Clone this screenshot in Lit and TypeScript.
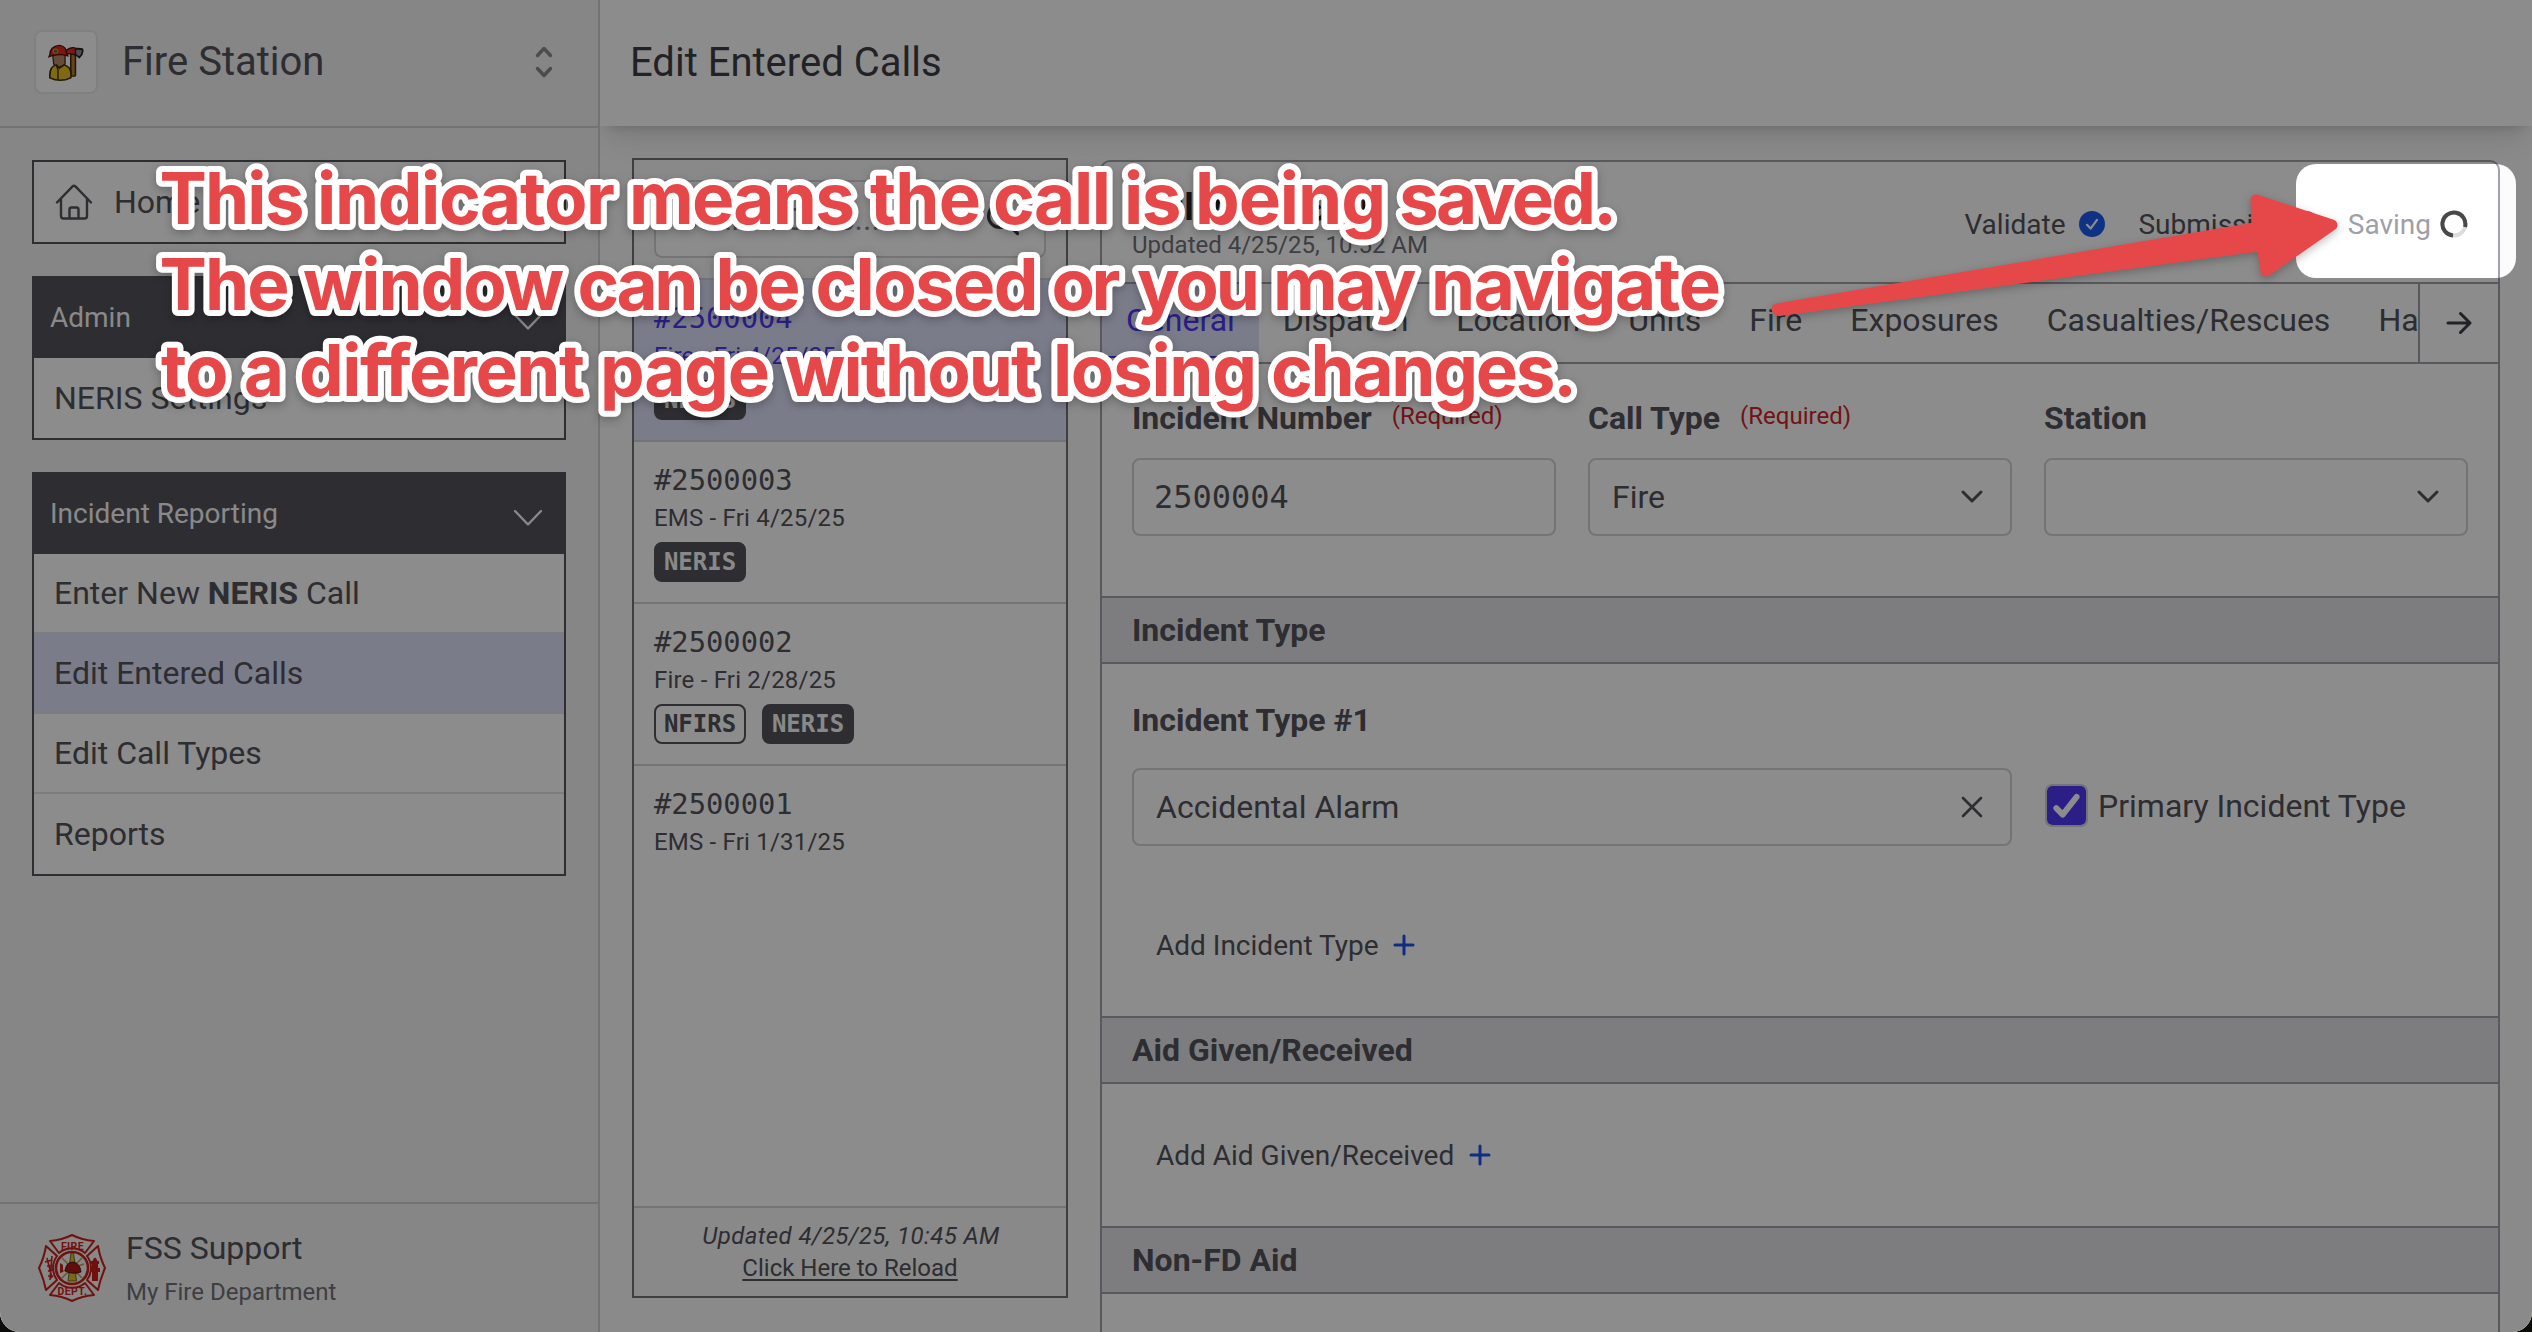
import { LitElement, html, css, svg } from "lit";
import { customElement, property } from "lit/decorators.js";
import { classMap } from "lit/directives/class-map.js";

const chevron = html`<svg class="chev" width="30" height="18" viewBox="0 0 30 18" fill="none" stroke="currentColor" stroke-width="2.4" stroke-linecap="round" stroke-linejoin="round"><path d="M2 2 L15 15.5 L28 2" /></svg>`;
const caret = html`<svg width="22" height="14" viewBox="0 0 22 14" fill="none" stroke="currentColor" stroke-width="3" stroke-linecap="round" stroke-linejoin="round"><path d="M2 2 L11 11 L20 2" /></svg>`;
const plus = html`<svg class="plus" width="22" height="22" viewBox="0 0 22 22" fill="none" stroke="#1d55ee" stroke-width="3" stroke-linecap="round"><path d="M11 2 V20 M2 11 H20" /></svg>`;
const okCircle = html`<svg width="26" height="26" viewBox="0 0 26 26"><circle cx="13" cy="13" r="13" fill="#1d5bf0" /><path d="M8 13.8 L11.6 17.6 L18 8.8" fill="none" stroke="#fff" stroke-width="2.2" stroke-linecap="round" stroke-linejoin="round" /></svg>`;

@customElement("fire-sidebar")
export class FireSidebar extends LitElement {
  static styles = css`
    :host { display: flex; flex-direction: column; width: 598px; flex: none; background: #f4f4f5; border-right: 2px solid #d4d4d8; color: #52525b; font-size: 32px; }
    .top { display: flex; align-items: center; box-sizing: border-box; padding: 0 45px 2px 34px; border-bottom: 2px solid #d4d4d8; height: 128px; }
    .tile { width: 60px; height: 60px; border: 2px solid #e9e9ec; border-radius: 8px; background: #fff; display: grid; place-items: center; margin-right: 24px; }
    .brand { font-size: 40px; flex: 1; line-height: 48px; }
    .menu { flex: 1; padding: 32px; display: flex; flex-direction: column; gap: 32px; }
    .box { border: 2px solid #52525b; background: #fff; }
    .home { display: flex; align-items: center; height: 80px; padding-left: 21px; gap: 21px; }
    .head { display: flex; align-items: center; justify-content: space-between; background: #52525b; color: #fafafa; font-size: 28px; height: 80px; padding: 0 21px 0 16px; }
    .head span { margin-top: -1px; }
    .chev { margin-top: 7px; }
    .row { height: 78px; line-height: 78px; padding-left: 20px; border-bottom: 2px solid #e4e4e7; }
    .row:last-child { height: 80px; line-height: 80px; border-bottom: 0; }
    .row.on { background: #e1e2fc; }
    .user { display: flex; align-items: center; height: 128px; border-top: 2px solid #d4d4d8; padding-left: 38px; gap: 20px; }
    .who { line-height: 40px; }
    .org { font-size: 24px; line-height: 32px; margin-top: 8px; color: #71717a; }
    .badge-text { font: bold 10.5px Roboto, "Liberation Sans", sans-serif; fill: #d3201c; letter-spacing: 0.4px; }
  `;
  render() {
    return html`
      <div class="top">
        <div class="tile">
          <svg width="36" height="37" viewBox="0 0 38 46" preserveAspectRatio="none">
            <rect x="24" y="10" width="5" height="30" rx="1.5" fill="#b57c36" stroke="#40280c" stroke-width="1.6" />
            <path d="M19 8 Q24 3 29 5 L36 6 Q38 11 33 17 Q30 12 19 12 Z" fill="#e82c22" stroke="#3a1512" stroke-width="1.4" />
            <path d="M29 6 L36.500 7 Q37 12 33 16.500 L29 13 Z" fill="#8d9096" stroke="#222" stroke-width="1.6" />
            <path d="M5 13 L18 13 L18 25 Q12 32 6 25 Z" fill="#b98a66" stroke="#4a2a1a" stroke-width="1.4" />
            <path d="M2 42 Q1 28 9 26 L12 30 L17 26 Q26 29 24 42 Q13 48 2 42 Z" fill="#e9c01a" stroke="#3b2f06" stroke-width="1.8" />
            <path d="M9 27 L10.500 32 V44" stroke="#3c3210" stroke-width="1.5" fill="none" />
            <path d="M2 13 Q2 3 12 1.500 Q20 3 19.500 12 Q21 13 21 15 Q11 11 1 16 Z" fill="#e3281d" stroke="#4a100c" stroke-width="1.4" />
            <circle cx="8" cy="9" r="2.600" fill="#4d6b2a" stroke="#e5c030" stroke-width="1" />
          </svg>
        </div>
        <div class="brand">Fire Station</div>
        <svg width="18" height="32" viewBox="0 0 18 32" fill="none" stroke="#8a8a93" stroke-width="3.4" stroke-linecap="round" stroke-linejoin="round"><path d="M2.500 9.500 L9 2.500 L15.500 9.500 M2.500 22.500 L9 29.500 L15.500 22.500" /></svg>
      </div>
      <div class="menu">
        <div class="box home">
          <svg width="38" height="36" viewBox="0 0 38 36" fill="none" stroke="#52525b" stroke-width="2.4" stroke-linecap="round" stroke-linejoin="round"><path d="M2 18.500 L17.600 2.400 Q19 1.200 20.400 2.400 L36 18.500 M6 15 V32 Q6 34.500 8.500 34.500 H29.500 Q32 34.500 32 32 V15 M14.500 34 V25.500 Q14.500 23.500 16.500 23.500 H21.500 Q23.500 23.500 23.500 25.500 V34" /></svg>
          <span>Home</span>
        </div>
        <div class="box">
          <div class="head"><span>Admin</span>${chevron}</div>
          <div class="row">NERIS Settings</div>
        </div>
        <div class="box">
          <div class="head"><span>Incident Reporting</span>${chevron}</div>
          <div class="row">Enter New <b>NERIS</b> Call</div>
          <div class="row on">Edit Entered Calls</div>
          <div class="row">Edit Call Types</div>
          <div class="row">Reports</div>
        </div>
      </div>
      <div class="user">
        <svg width="68" height="68" viewBox="0 0 68 68">
          <g fill="#f7f7f7" stroke="#c9211d" stroke-width="2" stroke-linejoin="round">
            <path d="M12 7 Q24 6 34 1 Q44 6 56 7 L47 19 A20 20 0 0 0 21 19 Z" />
            <path d="M12 61 Q24 62 34 67 Q44 62 56 61 L47 49 A20 20 0 0 1 21 49 Z" />
            <path d="M8 12 Q6 24 1 34 Q6 46 8 56 L19 46 A20 20 0 0 1 19 22 Z" />
            <path d="M60 12 Q62 24 67 34 Q62 46 60 56 L49 46 A20 20 0 0 0 49 22 Z" />
            <circle cx="34" cy="34" r="16" stroke-width="2.600" />
          </g>
          <path d="M54 47 V30 H53 V27 H54.500 Q57 20 59.500 27 H61 V30 H60 V47 Z M52 34 H62 V38 H52 Z" fill="#c9211d" />
          <path d="M9 24 L14 44 M14 22 L12 46 M7 28 L14 26 M9 32 L14 32 M10 37 L15 36 M10 42 L15 42" stroke="#c9211d" stroke-width="1.600" />
          <path d="M24 24 L44 44 M44 24 L24 44 M22 38 L46 30" stroke="#b9a050" stroke-width="1.500" />
          <path d="M33 19 H35.500 L37 30 H31.500 Z M31 38 H37.500 L38.500 47 H30 Z" fill="#d8bf2a" stroke="#5a4c10" stroke-width="0.800" />
          <path d="M27 37 Q28 28 35 28 Q42 29 43 38 Q35 41 27 37 Z" fill="#b01815" stroke="#3a0c0a" stroke-width="0.800" />
          <path d="M22 29 L25 31 V38 L22 39 Z" fill="#c9211d" />
          ${svg`<text class="badge-text" x="34.500" y="15.500" text-anchor="middle">FIRE</text><text class="badge-text" x="34.500" y="60.500" text-anchor="middle">DEPT.</text>`}
        </svg>
        <div>
          <div class="who">FSS Support</div>
          <div class="org">My Fire Department</div>
        </div>
      </div>
    `;
  }
}

interface Call { id: string; kind: string; tags: string[]; on?: boolean; }

@customElement("call-list")
export class CallList extends LitElement {
  @property({ attribute: false }) calls: Call[] = [
    { id: "#2500004", kind: "Fire - Fri 4/25/25", tags: ["NERIS"], on: true },
    { id: "#2500003", kind: "EMS - Fri 4/25/25", tags: ["NERIS"] },
    { id: "#2500002", kind: "Fire - Fri 2/28/25", tags: ["NFIRS", "NERIS"] },
    { id: "#2500001", kind: "EMS - Fri 1/31/25", tags: [] },
  ];
  static styles = css`
    :host { display: flex; flex-direction: column; box-sizing: border-box; width: 436px; height: 1140px; flex: none; border: 2px solid #71717a; background: #fff; color: #52525b; }
    .find { background: #fafafa; padding: 20px; border-bottom: 2px solid #d4d4d8; }
    .input { box-sizing: border-box; height: 78px; border: 2px solid #d4d4d8; border-radius: 8px; background: #fff; display: flex; align-items: center; justify-content: space-between; padding: 0 24px 0 22px; font-size: 32px; color: #85858e; }
    .list { flex: 1; }
    .item { box-sizing: border-box; height: 162px; padding: 20px 20px 0; border-bottom: 2px solid #d4d4d8; }
    .item:last-child { border-bottom: 0; }
    .item.on { background: #e1e2fc; color: #4f39f6; }
    .id { font: 28.8px/36px "DejaVu Sans Mono", "Liberation Mono", monospace; }
    .kind { font-size: 24px; line-height: 33px; margin-top: 4px; letter-spacing: 0.2px; }
    .tags { display: flex; gap: 16px; margin-top: 7px; }
    .tag { box-sizing: border-box; width: 92px; height: 40px; border: 2px solid #52525b; border-radius: 8px; text-align: center; font: bold 24px/36px "DejaVu Sans Mono", "Liberation Mono", monospace; color: #52525b; }
    .tag.full { background: #52525b; color: #fafafa; }
    .foot { box-sizing: border-box; height: 90px; border-top: 2px solid #d4d4d8; background: #fafafa; padding-top: 12px; text-align: center; font-size: 24px; line-height: 32px; }
    .foot i { letter-spacing: 0.4px; padding-left: 2px; }
    .foot u { text-underline-offset: 3px; text-decoration-thickness: 2px; }
  `;
  render() {
    return html`
      <div class="find">
        <div class="input"><span>Search Calls...</span>
          <svg width="34" height="34" viewBox="0 0 34 34" fill="none" stroke="#3f3f46" stroke-width="3.200" stroke-linecap="round"><circle cx="14" cy="14" r="11.500" /><path d="M22.500 22.500 L31.500 31.500" /></svg>
        </div>
      </div>
      <div class="list">
        ${this.calls.map((c) => html`
          <div class=${classMap({ item: true, on: !!c.on })}>
            <div class="id">${c.id}</div>
            <div class="kind">${c.kind}</div>
            <div class="tags">${c.tags.map((t) => html`<div class=${classMap({ tag: true, full: t === "NERIS" })}>${t}</div>`)}</div>
          </div>`)}
      </div>
      <div class="foot"><i>Updated 4/25/25, 10:45 AM</i><br /><u>Click Here to Reload</u></div>
    `;
  }
}

@customElement("call-editor")
export class CallEditor extends LitElement {
  static styles = css`
    :host { display: block; box-sizing: border-box; flex: 1; min-width: 0; margin-top: 2px; height: 1190px; border: 2px solid #a1a1aa; border-radius: 10px; background: #fff; color: #52525b; font-size: 32px; }
    .head { box-sizing: border-box; height: 122px; border-bottom: 2px solid #a1a1aa; display: flex; justify-content: space-between; padding: 26px 30px 0; }
    .title { font-size: 36px; font-weight: 700; line-height: 40px; color: #27272a; }
    .mono { font-family: "DejaVu Sans Mono", "Liberation Mono", monospace; }
    .title .mono { font-size: 35px; }
    .upd { font-size: 24px; line-height: 32px; margin-top: 1px; color: #71717a; }
    .acts { display: flex; align-items: center; height: 72px; font-size: 28px; }
    .act { display: flex; align-items: center; gap: 14px; margin-right: 33px; }
    .act.sent { gap: 8px; margin-right: 29px; }
    .saving { display: flex; align-items: center; gap: 9px; color: #9f9fa9; }
    .tabs { box-sizing: border-box; height: 80px; border-bottom: 2px solid #a1a1aa; display: flex; }
    .strip { flex: 1; min-width: 0; display: flex; overflow: hidden; white-space: nowrap; }
    .tab { box-sizing: border-box; height: 74px; line-height: 72px; padding: 0 24px; flex: none; }
    .tab.on { background: #e1e2fc; color: #4f39f6; border-bottom: 2px solid #4f39f6; }
    .next { width: 78px; border-left: 2px solid #a1a1aa; display: grid; place-items: center; color: #3f3f46; }
    .grid { display: grid; grid-template-columns: repeat(3, 424px); column-gap: 32px; padding: 34px 30px 60px; }
    .label { display: flex; align-items: center; font-weight: 700; line-height: 40px; height: 40px; white-space: nowrap; }
    .req { font-weight: 400; font-size: 24px; color: #d0232a; margin-left: 20px; padding-bottom: 4px; }
    .input { box-sizing: border-box; height: 78px; border: 2px solid #d4d4d8; border-radius: 8px; display: flex; align-items: center; justify-content: space-between; padding: 0 27px 0 22px; }
    .grid .input { margin-top: 20px; padding-left: 20px; }
    .grid .input.sel { padding-left: 22px; }
    .sec { box-sizing: border-box; height: 68px; line-height: 64px; border: solid #a1a1aa; border-width: 2px 0; background: #e4e4e7; font-weight: 700; padding-left: 30px; }
    .body { padding: 36px 30px; }
    .line { display: flex; align-items: center; margin-top: 28px; }
    .line .input { width: 880px; padding-left: 22px; }
    .check { box-sizing: border-box; width: 43px; height: 43px; border: 2px solid #d4d4d8; border-radius: 7px; background: #4f39f6; background-clip: padding-box; margin: -3px 10px 0 33px; display: grid; place-items: center; }
    .prim { margin-top: -2px; }
    .add { display: flex; align-items: center; gap: 14.5px; height: 70px; padding-left: 24px; font-size: 28px; }
    .body .line + .add { margin-top: 64px; }
  `;
  render() {
    const tabs = ["General", "Dispatch", "Location", "Units", "Fire", "Exposures", "Casualties/Rescues", "Hazards"];
    return html`
      <div class="head">
        <div>
          <div class="title">Call <span class="mono">#2500004</span></div>
          <div class="upd">Updated 4/25/25, 10:52 AM</div>
        </div>
        <div class="acts">
          <div class="act"><span>Validate</span>${okCircle}</div>
          <div class="act sent"><span>Submission</span>${okCircle}</div>
          <div class="saving"><span>Saving</span>
            <svg width="28" height="30" viewBox="0 0 28 30" fill="none" stroke-width="4"><circle cx="14" cy="15" r="11.500" stroke="#dcdcdc" /><path d="M25 18 A11.500 11.500 0 1 0 13 26.500" stroke="#48484a" /></svg>
          </div>
        </div>
      </div>
      <div class="tabs">
        <div class="strip">${tabs.map((t, i) => html`<div class=${classMap({ tab: true, on: i === 0 })}>${t}</div>`)}</div>
        <div class="next"><svg width="26" height="24" viewBox="0 0 26 24" fill="none" stroke="currentColor" stroke-width="3" stroke-linecap="round" stroke-linejoin="round"><path d="M2 12 H24 M14.500 2.500 L24 12 L14.500 21.500" /></svg></div>
      </div>
      <div class="grid">
        <div>
          <div class="label">Incident Number<span class="req">(Required)</span></div>
          <div class="input mono">2500004</div>
        </div>
        <div>
          <div class="label">Call Type<span class="req">(Required)</span></div>
          <div class="input sel"><span>Fire</span>${caret}</div>
        </div>
        <div>
          <div class="label">Station</div>
          <div class="input sel"><span></span>${caret}</div>
        </div>
      </div>
      <div class="sec">Incident Type</div>
      <div class="body">
        <div class="label">Incident Type #1</div>
        <div class="line">
          <div class="input"><span>Accidental Alarm</span>
            <svg width="22" height="22" viewBox="0 0 22 22" fill="none" stroke="#52525b" stroke-width="2.600" stroke-linecap="round"><path d="M2 2 L20 20 M20 2 L2 20" /></svg>
          </div>
          <div class="check"><svg width="30" height="28" viewBox="0 0 28 26" fill="none" stroke="#fff" stroke-width="5.500" stroke-linecap="round" stroke-linejoin="round"><path d="M4 15 L10 21 L23 4.500" /></svg></div>
          <span class="prim">Primary Incident Type</span>
        </div>
        <div class="add"><span>Add Incident Type</span>${plus}</div>
      </div>
      <div class="sec">Aid Given/Received</div>
      <div class="body"><div class="add"><span>Add Aid Given/Received</span>${plus}</div></div>
      <div class="sec">Non-FD Aid</div>
    `;
  }
}

/** One annotation line: baseline, then each word with its start and its advance width. */
interface NoteLine { y: number; words: [string, number, number][]; }

const NOTE: NoteLine[] = [
  { y: 224, words: [["This", 159.5, 145], ["indicator", 317, 298], ["means", 629, 226], ["the", 870, 111], ["call", 993, 118], ["is", 1124, 57.5], ["being", 1195, 191], ["saved.", 1399, 218]] },
  { y: 310, words: [["The", 159.5, 130], ["window", 303, 261], ["can", 577.5, 121], ["be", 715.5, 85], ["closed", 815.5, 223], ["or", 1051.5, 69], ["you", 1137, 123], ["may", 1273, 143.5], ["navigate", 1431, 290]] },
  { y: 396, words: [["to", 161, 67.5], ["a", 244, 40], ["different", 299, 286], ["page", 600, 170], ["without", 785, 252], ["losing", 1053, 204], ["changes.", 1271, 306]] },
];

@customElement("app-root")
export class AppRoot extends LitElement {
  static styles = css`
    :host { display: block; background: #0b0c08; font-family: Roboto, "Liberation Sans", sans-serif; }
    .window { position: relative; display: flex; width: 2532px; height: 1332px; overflow: hidden; border-radius: 0 0 20px 20px; background: #fafafa; }
    .main { flex: 1; min-width: 0; display: flex; flex-direction: column; background: #fcfcfc; overflow: hidden; }
    .bar { box-sizing: border-box; height: 126px; flex: none; background: #fff; padding: 0 30px; line-height: 125px; font-size: 40px; color: #3f3f46; box-shadow: 0 20px 30px -6px rgba(0, 0, 0, 0.1), 0 8px 12px -8px rgba(0, 0, 0, 0.2); }
    .work { flex: 1; display: flex; gap: 32px; padding: 32px 32px 0; align-items: flex-start; }
    .spot { position: absolute; left: 2296px; top: 164px; width: 220px; height: 114px; border-radius: 20px; box-shadow: 0 0 0 2600px rgba(0, 0, 0, 0.45); }
    .notes { position: absolute; left: 0; top: 0; }
    .say { font: 700 71px Inter, "Liberation Sans", sans-serif; font-variant-ligatures: none; }
    .edge { fill: #fff; stroke: #fff; stroke-width: 12px; stroke-linejoin: round; }
    .ink { fill: #e6484a; }
    .lift { filter: drop-shadow(0 3px 4px rgba(0, 0, 0, 0.25)); }
  `;
  render() {
    return html`
      <div class="window">
        <fire-sidebar></fire-sidebar>
        <div class="main">
          <div class="bar">Edit Entered Calls</div>
          <div class="work">
            <call-list></call-list>
            <call-editor></call-editor>
          </div>
        </div>
        <div class="spot"></div>
        <svg class="notes" width="2532" height="1332" viewBox="0 0 2532 1332">
          <path class="lift" d="M1777 309 L2257.500 227.500 L2256 200 L2332 225 L2266 271 L2262 245.500 L1779 310.500 Z" fill="#e6484a" stroke="#e6484a" stroke-width="11" stroke-linejoin="round" />
          <use class="edge lift" href="#note" />
          <g class="ink">
            <g id="note">
              ${NOTE.map((l) => l.words.map(([w, x, len]) => svg`<text class="say" x=${x} y=${l.y} textLength=${len} lengthAdjust=${w.length > 1 ? "spacing" : "spacingAndGlyphs"}>${w}</text>`))}
            </g>
          </g>
        </svg>
      </div>
    `;
  }
}
